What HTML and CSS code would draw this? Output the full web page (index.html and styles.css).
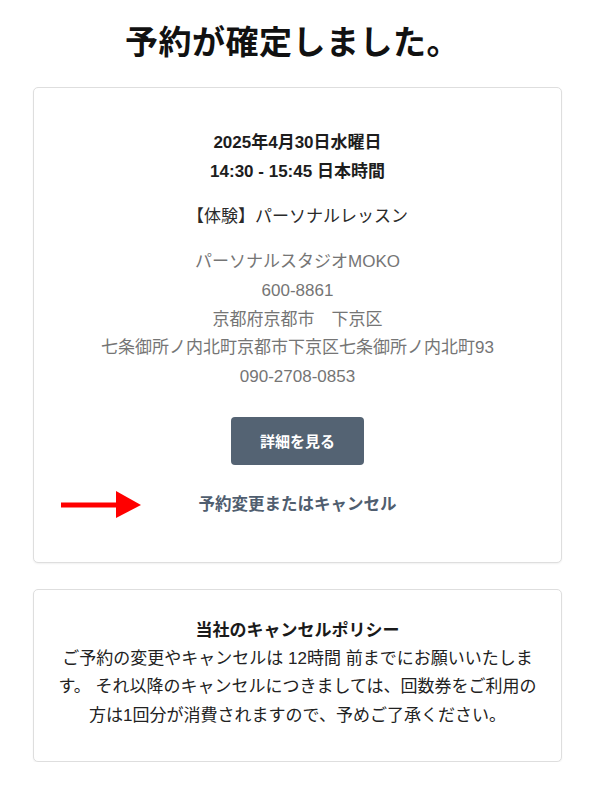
FILE: index.html
```html
<!DOCTYPE html>
<html lang="ja">
<head>
<meta charset="utf-8">
<title>予約が確定しました。</title>
<link rel="stylesheet" href="styles.css">
</head>
<body>
<main class="page">
  <h1 class="title">予約が確定しました。</h1>
  <section class="card card-booking">
    <div class="datetime">
      <p>2025年4月30日水曜日</p>
      <p>14:30 - 15:45 日本時間</p>
    </div>
    <p class="service">【体験】パーソナルレッスン</p>
    <div class="venue">
      <p>パーソナルスタジオMOKO</p>
      <p>600-8861</p>
      <p>京都府京都市　下京区</p>
      <p>七条御所ノ内北町京都市下京区七条御所ノ内北町93</p>
      <p>090-2708-0853</p>
    </div>
    <a class="btn" href="#">詳細を見る</a>
    <div class="change-row">
      <span class="arrow" aria-hidden="true">
        <svg width="80" height="28" viewBox="0 0 80 28"><rect x="0" y="11.5" width="57" height="5" fill="#ff0000"/><polygon points="55,0 80,14 55,27" fill="#ff0000"/></svg>
      </span>
      <a class="change-link" href="#">予約変更またはキャンセル</a>
    </div>
  </section>
  <section class="card card-policy">
    <h2 class="policy-title">当社のキャンセルポリシー</h2>
    <p class="policy-text">ご予約の変更やキャンセルは 12時間 前までにお願いいたします。 それ以降のキャンセルにつきましては、回数券をご利用の方は1回分が消費されますので、予めご了承ください。</p>
  </section>
</main>
</body>
</html>
```
FILE: styles.css
```css
* { box-sizing: border-box; }
html, body { margin: 0; padding: 0; background: #ffffff; }
body {
  font-family: "Liberation Sans", "Noto Sans CJK JP", sans-serif;
  color: #222;
}
p { margin: 0; }
.page {
  width: 529px;
  margin-left: 33px;
  padding-top: 16px;
  display: flex;
  flex-direction: column;
}
.title {
  margin: 0 10px 0 0;
  font-family: "Noto Sans CJK JP", sans-serif;
  font-size: 33px;
  font-weight: 700;
  line-height: 48px;
  text-align: center;
  color: #111;
  letter-spacing: 0.5px;
}
.card {
  border: 1px solid #dedede;
  border-radius: 5px;
  box-shadow: 0 1px 2px rgba(0,0,0,0.06);
  background: #fff;
  text-align: center;
  font-size: 17px;
}
.card-booking {
  margin-top: 23px;
  padding: 40px 24px 43px;
  display: flex;
  flex-direction: column;
  align-items: center;
}
.datetime p {
  font-weight: 700;
  line-height: 29px;
  color: #1d1d1d;
}
.service {
  margin-top: 16px;
  line-height: 29px;
  color: #2a2a2a;
}
.venue {
  margin-top: 17px;
  color: #757575;
  line-height: 28.8px;
}
.btn {
  margin-top: 25px;
  width: 133px;
  height: 48px;
  display: flex;
  align-items: center;
  justify-content: center;
  background: #546373;
  border-radius: 4px;
  color: #fff;
  font-size: 15px;
  font-weight: 700;
  text-decoration: none;
}
.change-row {
  margin-top: 25px;
  position: relative;
  width: 100%;
  display: flex;
  justify-content: center;
}
.arrow {
  position: absolute;
  left: 3px;
  top: 1px;
  display: block;
  line-height: 0;
}
.change-link {
  font-size: 16.5px;
  font-weight: 700;
  line-height: 29px;
  color: #505e6f;
  text-decoration: none;
}
.card-policy {
  margin-top: 26px;
  padding: 26px 24px 31px;
}
.policy-title {
  margin: 0;
  font-size: 17px;
  font-weight: 700;
  line-height: 29px;
  color: #1a1a1a;
}
.policy-text {
  line-height: 28.5px;
  color: #222;
}
```
